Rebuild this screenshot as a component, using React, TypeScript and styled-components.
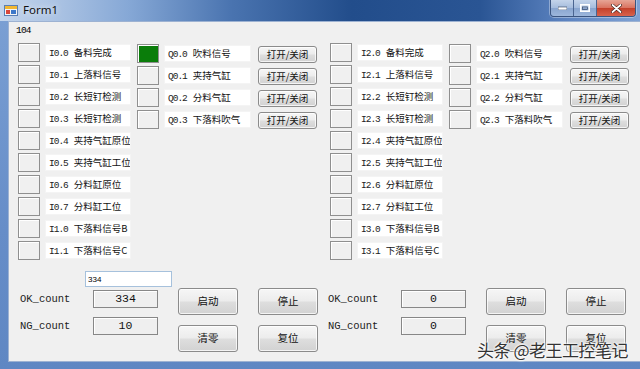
import React from 'react';
import styled, { createGlobalStyle } from 'styled-components';

type IoItem = { code: string; name: string; on?: boolean };

const inputNames = [
  '备料完成',
  '上落料信号',
  '长短钉检测',
  '长短钉检测',
  '夹持气缸原位',
  '夹持气缸工位',
  '分料缸原位',
  '分料缸工位',
  '下落料信号B',
  '下落料信号C',
];
const outputNames = ['吹料信号', '夹持气缸', '分料气缸', '下落料吹气'];

const makeInputs = (byte: number): IoItem[] =>
  inputNames.map((name, i) => ({
    code: `I${byte + Math.floor(i / 8)}.${i % 8}`,
    name,
  }));

const makeOutputs = (byte: number, firstOn: boolean): IoItem[] =>
  outputNames.map((name, i) => ({ code: `Q${byte}.${i}`, name, on: firstOn && i === 0 }));

const stations = [
  { inputs: makeInputs(0), outputs: makeOutputs(0, true), ok: '334', ng: '10', input: '334', shift: 0 },
  { inputs: makeInputs(2), outputs: makeOutputs(2, false), ok: '0', ng: '0', input: null, shift: -4 },
];

const App: React.FC = () => (
  <>
    <GlobalStyle />
    <Window>
      <TitleBar>
        <AppIcon viewBox="0 0 14 14">
          <rect x="0.5" y="2.5" width="13" height="10" fill="#f4f4f4" stroke="#5a7fb5" />
          <rect x="1" y="3" width="12" height="3" fill="#f1b733" />
          <rect x="2" y="7" width="4" height="4" fill="#d9473a" />
          <rect x="7" y="7" width="5" height="4" fill="#3d78c9" />
        </AppIcon>
        <Title>Form1</Title>
        <Controls>
          <CtrlButton>
            <svg width="9" height="4" viewBox="0 0 9 4">
              <rect x="0" y="1" width="9" height="3" fill="#fff" stroke="#2d3e5a" strokeWidth="0.6" />
            </svg>
          </CtrlButton>
          <CtrlButton>
            <svg width="10" height="8" viewBox="0 0 10 8">
              <rect x="0.8" y="0.8" width="8.4" height="6.4" fill="none" stroke="#fff" strokeWidth="1.6" />
              <rect x="2.5" y="3" width="5" height="2.6" fill="none" stroke="#2d3e5a" strokeWidth="0.6" />
            </svg>
          </CtrlButton>
          <CloseButton>
            <svg width="11" height="9" viewBox="0 0 11 9">
              <path d="M1.5 1 L9.5 8 M9.5 1 L1.5 8" stroke="#3a1a14" strokeWidth="3" strokeLinecap="round" />
              <path d="M1.5 1 L9.5 8 M9.5 1 L1.5 8" stroke="#fff" strokeWidth="1.8" strokeLinecap="round" />
            </svg>
          </CloseButton>
        </Controls>
      </TitleBar>
      <Frame>
        <Client>
          <TopLabel>104</TopLabel>
          <Halves>
            {stations.map((st, si) => (
              <Half key={si}>
                <IoArea>
                  <IoColumn>
                    {st.inputs.map((it) => (
                      <IoRow key={it.code}>
                        <Indicator />
                        <Field $w={86}>
                          <Code>{it.code}</Code>
                          {it.name}
                        </Field>
                      </IoRow>
                    ))}
                  </IoColumn>
                  <IoColumn $offset={1}>
                    {st.outputs.map((it) => (
                      <IoRow key={it.code}>
                        <Indicator $on={it.on} />
                        <Field $w={87}>
                          <Code>{it.code}</Code>
                          {it.name}
                        </Field>
                        <WinButton $small>打开/关闭</WinButton>
                      </IoRow>
                    ))}
                  </IoColumn>
                </IoArea>
                <InputRow>{st.input !== null && <TextInput readOnly value={st.input} />}</InputRow>
                <CountArea $shift={st.shift}>
                  <CountGrid>
                    <CountLabel>OK_count</CountLabel>
                    <CountBox>{st.ok}</CountBox>
                    <CountLabel>NG_count</CountLabel>
                    <CountBox>{st.ng}</CountBox>
                  </CountGrid>
                  <ButtonGrid>
                    <WinButton>启动</WinButton>
                    <WinButton>停止</WinButton>
                    <WinButton>清零</WinButton>
                    <WinButton>复位</WinButton>
                  </ButtonGrid>
                </CountArea>
              </Half>
            ))}
          </Halves>
        </Client>
      </Frame>
      <Watermark>头条 @老王工控笔记</Watermark>
    </Window>
  </>
);

const GlobalStyle = createGlobalStyle`
  html, body {
    margin: 0;
    padding: 0;
    background: #ffffff;
  }
  body {
    width: 640px;
    height: 369px;
    overflow: hidden;
  }
`;

const Window = styled.div`
  position: relative;
  width: 640px;
  height: 369px;
  display: flex;
  flex-direction: column;
  background: #6a90c8;
  font-family: "Noto Sans CJK SC", sans-serif;
  color: #000;
`;

const TitleBar = styled.div`
  height: 21px;
  display: flex;
  align-items: flex-start;
  background: linear-gradient(
    90deg,
    #c3d5ec 0%,
    #aec5e4 8%,
    #86a8d6 20%,
    #4a74b0 36%,
    #224d8b 55%,
    #2a5594 75%,
    #5b82bf 88%,
    #7fa2d4 100%
  );
`;

const AppIcon = styled.svg`
  width: 14px;
  height: 14px;
  margin: 3px 0 0 4px;
`;

const Title = styled.span`
  margin: 3px 0 0 5px;
  font-family: "Noto Sans", sans-serif;
  font-size: 11.5px;
  line-height: 14px;
  color: #111;
  text-shadow: 0 0 6px rgba(255, 255, 255, 0.9);
`;

const Controls = styled.div`
  margin-left: auto;
  margin-right: 4px;
  display: flex;
  border: 1px solid #3b5580;
  border-top: none;
  border-radius: 0 0 4px 4px;
  overflow: hidden;
  box-shadow: 0 0 0 1px rgba(255, 255, 255, 0.35);
`;

const CtrlButton = styled.div`
  width: 22px;
  height: 16px;
  display: flex;
  align-items: center;
  justify-content: center;
  background: linear-gradient(#c4d4ea 0%, #a5bcdd 50%, #89a5cf 51%, #9db7dc 100%);
  border-right: 1px solid #4b6590;
`;

const CloseButton = styled(CtrlButton)`
  width: 38px;
  border-right: none;
  background: linear-gradient(#e6a596 0%, #d9725f 50%, #c3402a 51%, #d8624c 100%);
`;

const Frame = styled.div`
  flex: 1;
  display: flex;
  padding: 0 7px 7px 8px;
  background: linear-gradient(180deg, #7a9fd3 0%, #668dc8 60%, #5f87c3 100%);
`;

const Client = styled.div`
  flex: 1;
  display: flex;
  flex-direction: column;
  background: #f0f0f0;
  border: 1px solid #9db2d2;
`;

const TopLabel = styled.div`
  height: 21px;
  box-sizing: border-box;
  padding: 3px 0 0 7px;
  font-family: "Liberation Mono", monospace;
  font-size: 9.5px;
  line-height: 11px;
  letter-spacing: -0.8px;
`;

const Halves = styled.div`
  display: flex;
  padding-left: 9px;
`;

const Half = styled.div`
  width: 312px;
  display: flex;
  flex-direction: column;
`;

const IoArea = styled.div`
  display: flex;
  gap: 6px;
`;

const IoColumn = styled.div<{ $offset?: number }>`
  display: flex;
  flex-direction: column;
  gap: 3px;
  padding-top: ${(p) => p.$offset ?? 0}px;
`;

const IoRow = styled.div`
  height: 19px;
  display: flex;
  align-items: center;
  gap: 5px;
`;

const Indicator = styled.div<{ $on?: boolean }>`
  width: 22px;
  height: 19px;
  box-sizing: border-box;
  border: 1px solid #8f8f8f;
  box-shadow: inset 1px 1px 0 #ffffff;
  background: ${(p) => (p.$on ? '#0a7d0a' : '#f0f0f0')};
`;

const Field = styled.div<{ $w: number }>`
  width: ${(p) => p.$w}px;
  height: 17px;
  box-sizing: border-box;
  padding-left: 3px;
  background: #ffffff;
  border: 1px solid #f4f4f4;
  font-family: "Noto Sans CJK SC", sans-serif;
  font-size: 9.5px;
  line-height: 15px;
  white-space: nowrap;
  overflow: hidden;
  color: #111;
`;

const Code = styled.span`
  font-family: "Liberation Mono", monospace;
  font-size: 9.5px;
  letter-spacing: -1px;
  margin-right: 6px;
  color: #222;
`;

const WinButton = styled.button<{ $small?: boolean }>`
  width: ${(p) => (p.$small ? 59 : 60)}px;
  height: ${(p) => (p.$small ? 17 : 27)}px;
  margin: ${(p) => (p.$small ? '2px 0 0 2px' : '0')};
  padding: 0;
  box-sizing: border-box;
  border: 1px solid #8b8b8b;
  border-radius: 3px;
  background: linear-gradient(#f6f6f6 0%, #ececec 48%, #dedede 52%, #d2d2d2 100%);
  box-shadow: inset 0 0 0 1px rgba(255, 255, 255, 0.75);
  font-family: "Noto Sans CJK SC", sans-serif;
  font-size: ${(p) => (p.$small ? 9.5 : 10.5)}px;
  line-height: 1;
  color: #111;
`;

const InputRow = styled.div`
  height: 16px;
  margin-top: 11px;
  padding-left: 67px;
`;

const TextInput = styled.input`
  display: block;
  width: 87px;
  height: 16px;
  box-sizing: border-box;
  margin: 0;
  padding: 0 0 0 2px;
  border: 1px solid #a6c1dc;
  background: #ffffff;
  font-family: "Liberation Sans", sans-serif;
  font-size: 8px;
  color: #000;
  outline: none;
`;

const CountArea = styled.div<{ $shift: number }>`
  display: flex;
  margin-top: 1px;
  margin-left: ${(p) => p.$shift}px;
`;

const CountGrid = styled.div`
  display: grid;
  grid-template-columns: 73px 65px;
  grid-auto-rows: 18px;
  row-gap: 9px;
  padding: 2px 0 0 2px;
  align-content: start;
`;

const CountLabel = styled.div`
  font-family: "Liberation Mono", monospace;
  font-size: 10.5px;
  line-height: 18px;
  color: #222;
`;

const CountBox = styled.div`
  box-sizing: border-box;
  border: 1px solid #878787;
  box-shadow: inset 1px 1px 0 #ffffff;
  background: #efefef;
  text-align: center;
  font-family: "Liberation Mono", monospace;
  font-size: 11.5px;
  line-height: 16px;
  color: #111;
`;

const ButtonGrid = styled.div`
  display: grid;
  grid-template-columns: 60px 60px;
  column-gap: 20px;
  row-gap: 10px;
  margin-left: 20px;
`;

const Watermark = styled.div`
  position: absolute;
  right: 12px;
  bottom: 9px;
  font-family: "Noto Sans CJK SC", sans-serif;
  font-size: 17px;
  line-height: 20px;
  color: #333;
  text-shadow: 0 0 2px #fff, 0 0 2px #fff, 0 0 3px #fff;
  letter-spacing: -0.5px;
`;

export default App;
